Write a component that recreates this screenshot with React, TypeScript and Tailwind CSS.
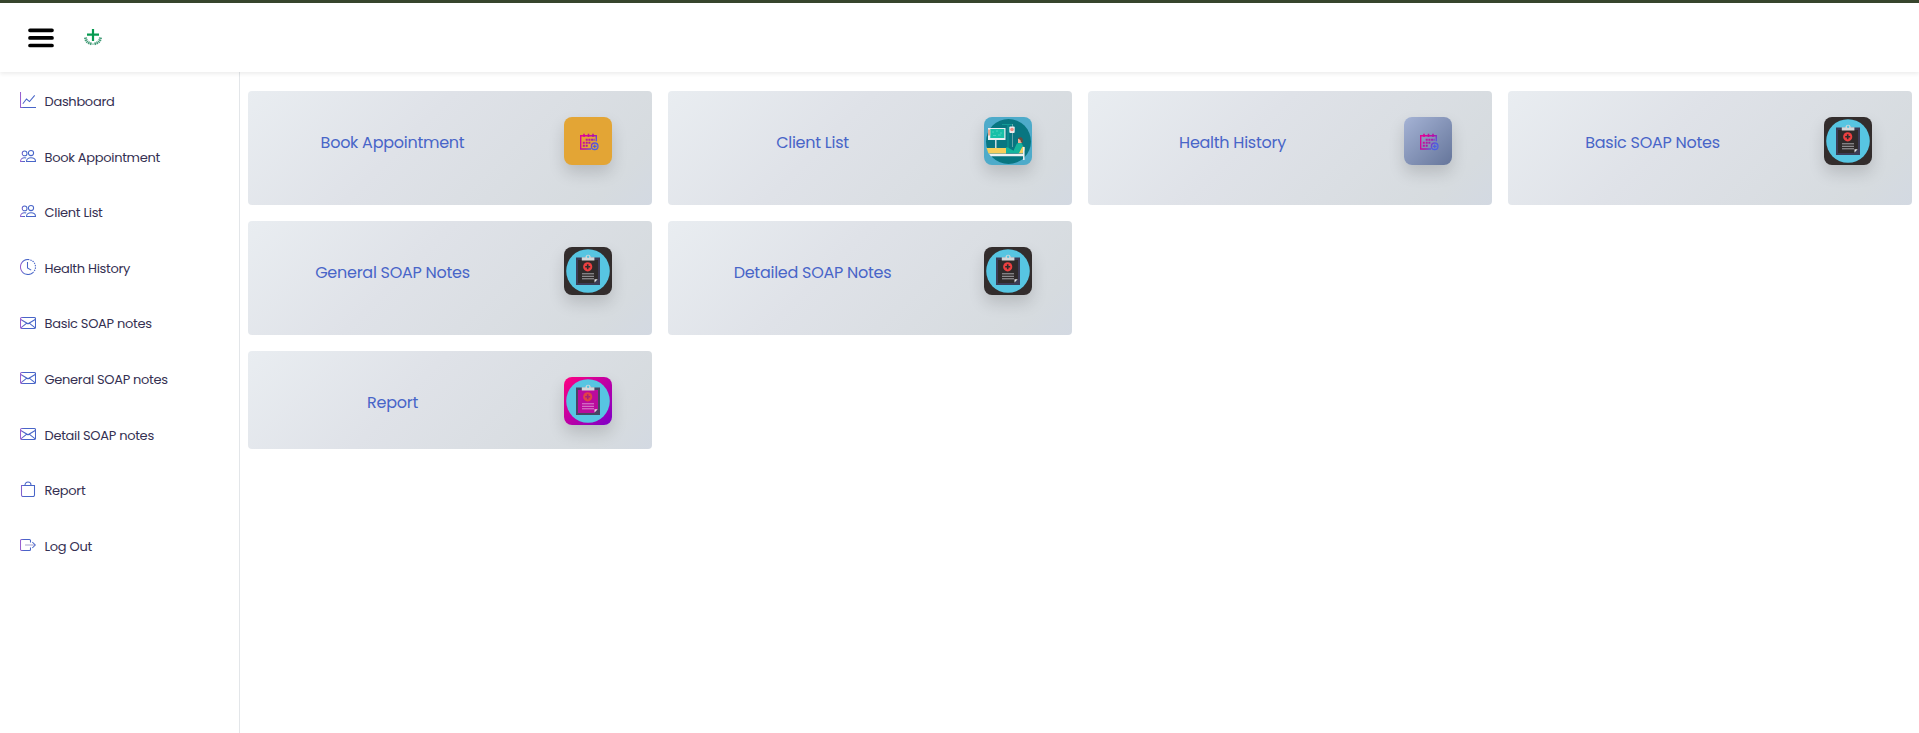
import React from "react";

const items: [string, string][] = [
  ["graph", "Dashboard"],
  ["people", "Book Appointment"],
  ["people", "Client List"],
  ["clock", "Health History"],
  ["mail", "Basic SOAP notes"],
  ["mail", "General SOAP notes"],
  ["mail", "Detail SOAP notes"],
  ["bag", "Report"],
  ["exit", "Log Out"],
];

function MenuIcon({ kind }: { kind: string }) {
  return (
    <svg viewBox="0 0 16 16" className="size-4 shrink-0" fill="none" stroke={"url(#g-" + kind + ")"} strokeWidth="1.05">
      <defs>
        <linearGradient id={"g-" + kind} gradientUnits="userSpaceOnUse" x1="0" y1="8" x2="4" y2="8">
          <stop offset="0" stopColor="#a45fd0" />
          <stop offset="1" stopColor="#4865c8" />
        </linearGradient>
      </defs>
      {kind === "graph" && (
        <>
          <path d="M.5 0v15.5H16" />
          <path d="M2.8 11.8 6.5 7l3 2.6L14.7 3.3" />
        </>
      )}
      {kind === "people" && (
        <>
          <circle cx="11" cy="5" r="2.6" />
          <circle cx="4.6" cy="5.4" r="2.4" />
          <path d="M6.5 13.5c0-2 1.6-3.700 4.500-3.700s4.500 1.700 4.500 3.700zM5 13.500H.5c0-2 1.500-3.700 4.200-3.700.6 0 1 .1 1.500.3" />
        </>
      )}
      {kind === "clock" && (
        <>
          <path d="M8 .5a7.5 7.5 0 1 0 5.3 12.8" />
          <path d="M8 .5a7.5 7.5 0 0 1 5.3 12.8" strokeDasharray="1.4 1" />
          <path d="M7.5 3v6l3.7 2.1" />
        </>
      )}
      {kind === "mail" && (
        <>
          <rect x=".5" y="2.5" width="15" height="11" rx="1.2" />
          <path d="m.8 4.5 7.200 4.300 7.200-4.300M.8 12.800l6-4.700M15.200 12.800l-6-4.700" />
        </>
      )}
      {kind === "bag" && <path d="M1.5 4.5h13V14a1.5 1.5 0 0 1-1.5 1.5H3A1.5 1.5 0 0 1 1.5 14zM5 4.500V4a3 3 0 0 1 6 0v.5" />}
      {kind === "exit" && (
        <>
          <path d="M10.5 5.5v-2a1 1 0 0 0-1-1h-8a1 1 0 0 0-1 1v9a1 1 0 0 0 1 1h8a1 1 0 0 0 1-1v-2" />
          <path d="M5 8h10" stroke="#c5c0df" strokeWidth="1.500" />
          <path d="m12.300 5 3 3-3 3" />
        </>
      )}
    </svg>
  );
}

function Calendar() {
  return (
    <svg viewBox="0 0 20 18" className="relative top-px left-px h-[18px] w-5" fill="none">
      <defs>
        <linearGradient id="cal" gradientUnits="userSpaceOnUse" x1="2" y1="4" x2="18" y2="15">
          <stop offset="0" stopColor="#e50095" />
          <stop offset=".5" stopColor="#b312a6" />
          <stop offset=".8" stopColor="#4e5de4" />
        </linearGradient>
      </defs>
      <g stroke="url(#cal)">
        <path d="M12 16H1.700V2.700h15.600v5.600" strokeWidth="1.400" />
        <path d="M5 .8V4M9.500 .8V4M14 .8V4" strokeWidth="1.600" />
        <circle cx="15.700" cy="13.300" r="3.300" strokeWidth="1.300" />
        <path d="M15.700 11.400v3.800M13.800 13.300h3.800" strokeWidth="1.200" />
      </g>
      <g fill="url(#cal)">
        <path d="M6.700 5.800h2v1.900h-2zM9.400 5.800h2v1.900h-2zM12.100 5.800h2v1.900h-2zM14.500 5.800h1.200v1.900h-1.200z" />
        <path d="M3.800 8.800h2v1.900h-2zM6.700 8.800h2v1.900h-2zM9.400 8.800h2v1.900h-2z" />
        <path d="M3.800 11.800h2v1.900h-2zM6.700 11.800h2v1.900h-2z" />
      </g>
    </svg>
  );
}

function Clipboard({ pink }: { pink?: boolean }) {
  return (
    <svg viewBox="0 0 48 48" className="size-12">
      <circle cx="24" cy="24" r="21.8" fill="#57c5e2" />
      <path d="M12 10.5h24V38H12z" fill={pink ? "#464765" : "#3c3b56"} />
      <path d="M14 13h20v19l-4 4H14z" fill={pink ? "#ba0b9d" : "#302b2b"} />
      <path d="M30.500 35.500v-3.200h3.200z" fill="#e2e4e5" />
      <path d="M17.800 10.300h3.700a2.600 2.600 0 0 1 5.200 0h3.700v3.300H17.800z" fill="#d3d6d8" />
      <circle cx="24.100" cy="9.700" r="1.200" fill="#57c5e2" />
      <circle cx="23.700" cy="19.800" r="4.600" fill={pink ? "#e24247" : "#ee4040"} />
      <path d="M23.700 17.300v5M21.200 19.800h5" stroke={pink ? "#a91f78" : "#302b2b"} strokeWidth="1.600" />
      <path d="M18 26.800h12M18 29.300h12M18 31.800h12" stroke={pink ? "#dc8ad0" : "#a6a5a8"} strokeWidth="1" />
    </svg>
  );
}

function Patient() {
  return (
    <svg viewBox="0 0 48 48" className="size-12">
      <circle cx="24.5" cy="24.5" r="22.5" fill="#087681" />
      <path d="M4 11h17.5v12H4z" fill="#eceff0" />
      <path d="M6.300 12h14v9h-14z" fill="#18c0a8" />
      <path d="M8 15h2M12 14h2M16 16h2M9 18.500h3M14 18h3" stroke="#68d8c4" strokeWidth=".7" />
      <path d="M4 12.500h2.200v6H4z" fill="#eaa88b" />
      <path d="M11.800 23v8" stroke="#e9edef" strokeWidth="1.300" />
      <path d="M18 7.500h11M24 7.500V31" stroke="#15a39b" strokeWidth=".8" />
      <path d="M28.500 7v3M28.500 16v14" stroke="#8db9bd" strokeWidth=".7" />
      <rect x="25.300" y="9.500" width="5.400" height="6.500" rx="1" fill="#eceff0" />
      <circle cx="28" cy="12.500" r="1.800" fill="#f08c83" />
      <path d="M2.500 31H22v5.500H4.500z" fill="#f8cf5b" />
      <path d="m33 36 5-6.500 2.500.5v3l-2 3.500z" fill="#f8cf5b" />
      <path d="M22 30.500h2l5.500 3.300 3.300-7.300 4.200-1 2 3-4 7.500H22z" fill="#15b59d" />
      <path d="M34 21.500h4v4.500h-4z" fill="#efb196" />
      <path d="M33.800 21.500q4-3 5 1v3h-1.800l-.6-2.500z" fill="#684c3f" />
      <path d="M5 36.800h35v2.400H6.800z" fill="#f0f1f2" />
      <path d="M39.800 30v13" stroke="#f0f1f2" strokeWidth="1.500" />
    </svg>
  );
}

type CardData = { title: string; tile: string; icon: React.ReactNode; height: string; column?: string };

const cards: CardData[] = [
  { title: "Book Appointment", tile: "bg-[#e3a535]", icon: <Calendar />, height: "h-[114px]" },
  { title: "Client List", tile: "bg-[#4eabca]", icon: <Patient />, height: "h-[114px]" },
  { title: "Health History", tile: "bg-[linear-gradient(135deg,#a5b3d5,#65759a)]", icon: <Calendar />, height: "h-[114px]" },
  { title: "Basic SOAP Notes", tile: "bg-[#332d2d]", icon: <Clipboard />, height: "h-[114px]" },
  { title: "General SOAP Notes", tile: "bg-[#332d2d]", icon: <Clipboard />, height: "h-[114px]" },
  { title: "Detailed SOAP Notes", tile: "bg-[#332d2d]", icon: <Clipboard />, height: "h-[114px]" },
  { title: "Report", tile: "bg-[linear-gradient(135deg,#ff0080,#7d00c9)]", icon: <Clipboard pink />, height: "h-[98px]", column: "col-start-1" },
];

function Card({ title, tile, icon, height, column = "" }: CardData) {
  return (
    <section
      className={
        "flex items-start rounded bg-[linear-gradient(135deg,#e9edf1_0%,#dfe2e8_40%,#d6dbdf_88%,#d3d9e2_100%)] pt-[26px] " +
        height + " " + column
      }
    >
      <h2 className="flex h-[52px] w-[289px] shrink-0 items-center justify-center text-base tracking-[-0.26px] whitespace-nowrap text-[#4865c8]">
        {title}
      </h2>
      <div
        className={
          "ml-[27px] flex size-12 items-center justify-center overflow-hidden rounded-lg shadow-[0_8px_16px_rgba(0,0,0,0.15)] " + tile
        }
      >
        {icon}
      </div>
    </section>
  );
}

export default function App() {
  return (
    <div className="flex h-[733px] flex-col overflow-hidden bg-white font-['Poppins','Inter',sans-serif]">
      <header className="relative flex h-[72px] shrink-0 items-start border-t-[3px] border-[#37452d] bg-white pl-7 shadow-[0_2px_4px_rgba(0,0,0,0.075)]">
        <button aria-label="Menu" className="mt-[25px]">
          <svg viewBox="0 0 26 20" className="h-5 w-[26px]" stroke="#000" strokeWidth="3.7" strokeLinecap="round">
            <path d="M2 2.300h22M2 9.900h22M2 17.500h22" />
          </svg>
        </button>
        <svg viewBox="0 0 18 18" className="mt-[25px] ml-[30px] size-[18px]" fill="none">
          <path d="M9 1v12M3 6.700h12" stroke="#079b50" strokeWidth="2.200" />
          <path d="M1.500 9.500q.5 5.500 6.500 6.300M16.500 9.500q-.5 5.500-6.500 6.300" stroke="#459c79" strokeWidth="3" strokeDasharray="1.200 .8" />
          <path d="M1.500 10.500q1.500 5.200 7.500 5.700q6-.5 7.500-5.700" stroke="#459c79" strokeWidth=".7" />
        </svg>
      </header>
      <div className="flex min-h-0 flex-1">
        <aside className="w-60 shrink-0 border-r border-[#e3e6e9] pt-[2px]">
          <nav>
            {items.map(([icon, text]) => (
              <a key={text} className="flex h-[55.6px] items-center gap-[8.5px] pl-5">
                <span className="-mt-[3px]">
                  <MenuIcon kind={icon} />
                </span>
                <span className="pt-[0.5px] text-[13px] leading-5 tracking-[-0.3px] whitespace-nowrap text-[#353052]">{text}</span>
              </a>
            ))}
          </nav>
        </aside>
        <main className="grid flex-1 grid-cols-[repeat(4,404px)] content-start gap-4 pt-[19px] pl-2">
          {cards.map((card) => (
            <Card key={card.title} {...card} />
          ))}
        </main>
      </div>
    </div>
  );
}
